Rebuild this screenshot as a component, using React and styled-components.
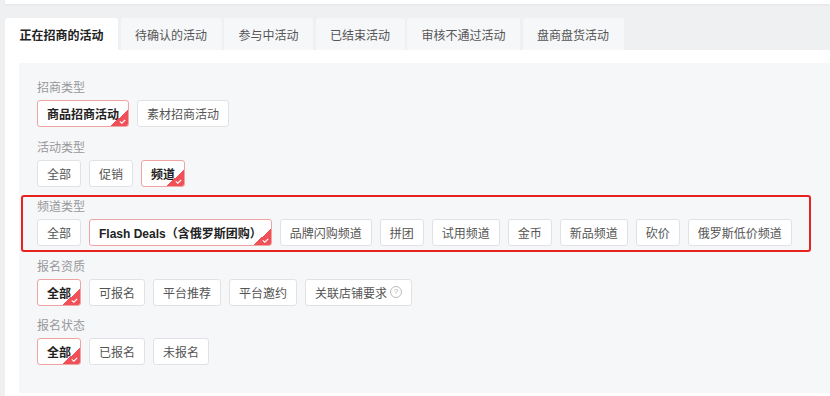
import React from "react";
import styled, { createGlobalStyle, css } from "styled-components";

const GlobalStyle = createGlobalStyle`
	html, body {
		margin: 0;
		padding: 0;
		background: #eff0f2;
		font-family: "Liberation Sans", "Noto Sans CJK SC", sans-serif;
	}
`;

// layout
const Page = styled.div`
	width: 830px;
	height: 396px;
	overflow: hidden;
	padding-left: 5px;
	box-sizing: border-box;
	background: #eff0f2;
`;

const TopCard = styled.div`
	height: 4px;
	background: #fff;
	box-shadow: 0 1px 3px rgba(0, 0, 0, 0.05);
`;

const TabBar = styled.div`
	display: flex;
	gap: 2.5px;
	margin-top: 14px;
`;

const Tab = styled.div`
	height: 32px;
	padding: 0 14.5px;
	display: flex;
	align-items: center;
	font-size: 12px;
	color: #555;
	background: #f6f7f9;
	border-radius: 3px 3px 0 0;

	${(p) =>
		p.$active &&
		css`
			background: #fff;
			color: #222;
			font-weight: 700;
		`}
`;

const Content = styled.div`
	background: #fff;
	padding: 13px 0 3px 14px;
`;

const Panel = styled.div`
	background: #f6f7f9;
	padding: 16px 0 28px 18px;
	display: flex;
	flex-direction: column;
	gap: 11.5px;
`;

const Section = styled.div`
	position: relative;

	${(p) =>
		p.$marked &&
		css`
			&::after {
				content: "";
				position: absolute;
				top: -3px;
				left: -16px;
				width: 786px;
				bottom: -6px;
				border: 2px solid #e8221f;
				border-radius: 3px;
				pointer-events: none;
			}
		`}
`;

const Label = styled.div`
	font-size: 12px;
	line-height: 18px;
	color: #999;
	margin-bottom: 3px;
`;

const Options = styled.div`
	display: flex;
	gap: 8px;
`;

const Option = styled.div`
	position: relative;
	height: 27px;
	box-sizing: border-box;
	padding: 0 9px;
	display: flex;
	align-items: center;
	gap: 3px;
	font-size: 12px;
	color: #555;
	background: #fff;
	border: 1px solid #e1e2e5;
	border-radius: 3px;
	overflow: hidden;
	white-space: nowrap;

	${(p) =>
		p.$selected &&
		css`
			border-color: #f0a3a3;
			color: #222;
			font-weight: 700;
		`}
`;

const Corner = styled.span`
	position: absolute;
	right: 0;
	bottom: 0;
	width: 18px;
	height: 16px;
	background: linear-gradient(to bottom right, transparent 50%, #f05058 50%);
	display: flex;
	align-items: flex-end;
	justify-content: flex-end;

	svg {
		margin: 0 2px 2px 0;
	}
`;

const Help = styled.span`
	width: 10px;
	height: 10px;
	border: 1px solid #bbb;
	border-radius: 50%;
	color: #aaa;
	font-size: 8px;
	line-height: 10px;
	text-align: center;
	font-weight: 400;
`;

const tabs = ["正在招商的活动", "待确认的活动", "参与中活动", "已结束活动", "审核不通过活动", "盘商盘货活动"];

const sections = [
	{ label: "招商类型", options: ["商品招商活动", "素材招商活动"], selected: 0 },
	{ label: "活动类型", options: ["全部", "促销", "频道"], selected: 2 },
	{
		label: "频道类型",
		options: ["全部", "Flash Deals（含俄罗斯团购）", "品牌闪购频道", "拼团", "试用频道", "金币", "新品频道", "砍价", "俄罗斯低价频道"],
		selected: 1,
		marked: true,
	},
	{ label: "报名资质", options: ["全部", "可报名", "平台推荐", "平台邀约", "关联店铺要求"], selected: 0, help: 4 },
	{ label: "报名状态", options: ["全部", "已报名", "未报名"], selected: 0 },
];

function Check() {
	return (
		<svg width="7" height="5" viewBox="0 0 7 5">
			<path d="M0.8 2.4 L2.8 4.2 L6.2 0.8" fill="none" stroke="#fff" strokeWidth="1.2" />
		</svg>
	);
}

export default function App() {
	return (
		<Page>
			<GlobalStyle />
			<TopCard />
			<TabBar>
				{tabs.map((t, i) => (
					<Tab key={t} $active={i === 0}>
						{t}
					</Tab>
				))}
			</TabBar>
			<Content>
				<Panel>
					{sections.map((s) => (
						<Section key={s.label} $marked={s.marked}>
							<Label>{s.label}</Label>
							<Options>
								{s.options.map((o, i) => (
									<Option key={o} $selected={i === s.selected}>
										{o}
										{s.help === i && <Help>?</Help>}
										{i === s.selected && (
											<Corner>
												<Check />
											</Corner>
										)}
									</Option>
								))}
							</Options>
						</Section>
					))}
				</Panel>
			</Content>
		</Page>
	);
}
